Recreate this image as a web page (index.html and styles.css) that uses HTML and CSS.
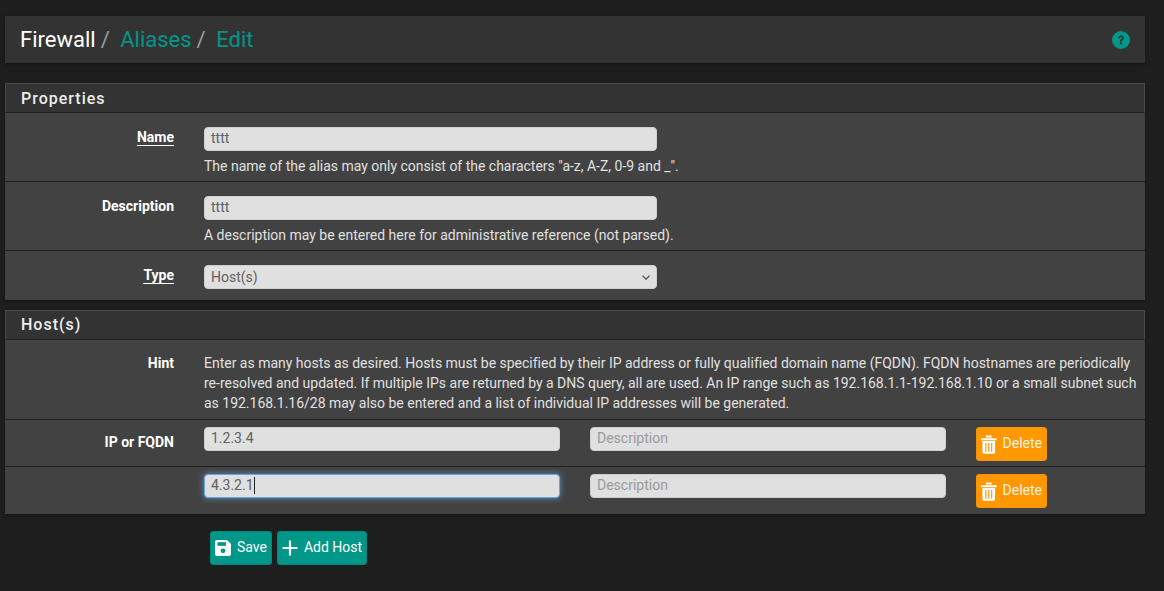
FILE: index.html
```html
<!DOCTYPE html>
<html lang="en">
<head>
<meta charset="utf-8">
<title>Firewall / Aliases / Edit</title>
<link rel="stylesheet" href="styles.css">
</head>
<body>
<header class="page-head">
  <h1 class="crumbs"><span class="crumb-root">Firewall</span><span class="sep">/</span><a class="crumb-link">Aliases</a><span class="sep">/</span><a class="crumb-link">Edit</a></h1>
  <svg class="help" viewBox="0 0 18 18" width="18" height="18"><circle cx="9" cy="9" r="9" fill="#009688"/><path d="M6.2 7.2C6.3 5.5 7.5 4.5 9.1 4.5c1.7 0 2.8 1 2.8 2.4 0 1.2-.7 1.7-1.4 2.2-.6.4-.8.7-.8 1.3H8c0-1.2.4-1.8 1.1-2.3.6-.4 1-.7 1-1.2 0-.5-.4-.9-1-.9-.7 0-1.1.4-1.2 1.1z" fill="#263238"/><rect x="8" y="11.3" width="1.9" height="1.9" fill="#263238"/></svg>
</header>

<section class="panel">
  <h2 class="panel-title">Properties</h2>
  <div class="row row-name">
    <div class="label"><span class="req">Name</span></div>
    <div class="field">
      <input class="input wide" value="tttt">
      <p class="hint">The name of the alias may only consist of the characters "a-z, A-Z, 0-9 and _".</p>
    </div>
  </div>
  <div class="row row-name">
    <div class="label">Description</div>
    <div class="field">
      <input class="input wide" value="tttt">
      <p class="hint">A description may be entered here for administrative reference (not parsed).</p>
    </div>
  </div>
  <div class="row row-type">
    <div class="label"><span class="req">Type</span></div>
    <div class="field">
      <div class="select wide">Host(s)
        <svg class="chev" viewBox="0 0 8 5" width="8" height="5"><path d="M.6.8L4 4.2 7.4.8" fill="none" stroke="#555" stroke-width="1.3"/></svg>
      </div>
    </div>
  </div>
</section>

<section class="panel">
  <h2 class="panel-title">Host(s)</h2>
  <div class="row row-hint">
    <div class="label">Hint</div>
    <div class="hint-text">Enter as many hosts as desired. Hosts must be specified by their IP address or fully qualified domain name (FQDN). FQDN hostnames are periodically re-resolved and updated. If multiple IPs are returned by a DNS query, all are used. An IP range such as 192.168.1.1-192.168.1.10 or a small subnet such as 192.168.1.16/28 may also be entered and a list of individual IP addresses will be generated.</div>
  </div>
  <div class="row row-host">
    <div class="label">IP or FQDN</div>
    <div class="host-cols">
      <input class="input" value="1.2.3.4">
      <input class="input" placeholder="Description">
      <button class="btn btn-del" type="button">
        <svg viewBox="1 0 16 19" width="16" height="19"><path d="M6 1.2h6M1 4h16" stroke="#fff" stroke-width="2" fill="none"/><path d="M2.5 6h13v11.5a1.5 1.5 0 0 1-1.5 1.5H4a1.5 1.5 0 0 1-1.5-1.5z" fill="#fff"/><path d="M6 8v9M9 8v9M12 8v9" stroke="#ff9800" stroke-width="1.2"/></svg>
        <span class="btn-text">Delete</span>
      </button>
    </div>
  </div>
  <div class="row row-host">
    <div class="label"></div>
    <div class="host-cols">
      <div class="input focused">4.3.2.1<span class="caret"></span></div>
      <input class="input" placeholder="Description">
      <button class="btn btn-del" type="button">
        <svg viewBox="1 0 16 19" width="16" height="19"><path d="M6 1.2h6M1 4h16" stroke="#fff" stroke-width="2" fill="none"/><path d="M2.5 6h13v11.5a1.5 1.5 0 0 1-1.5 1.5H4a1.5 1.5 0 0 1-1.5-1.5z" fill="#fff"/><path d="M6 8v9M9 8v9M12 8v9" stroke="#ff9800" stroke-width="1.2"/></svg>
        <span class="btn-text">Delete</span>
      </button>
    </div>
  </div>
</section>

<div class="actions">
  <button class="btn btn-go" type="button">
    <svg viewBox="0 0 16 16" width="16" height="16"><path d="M2 0h10l4 4v10a2 2 0 0 1-2 2H2a2 2 0 0 1-2-2V2a2 2 0 0 1 2-2z" fill="#fff"/><rect x="2.5" y="2.2" width="8.5" height="3.6" fill="#009688"/><circle cx="8" cy="10.8" r="2.4" fill="#009688"/></svg>
    <span class="btn-text">Save</span>
  </button>
  <button class="btn btn-go" type="button">
    <svg viewBox="0 0 16 16" width="16" height="16"><path d="M8 .5v15M.5 8h15" stroke="#fff" stroke-width="2.2" fill="none"/></svg>
    <span class="btn-text">Add Host</span>
  </button>
</div>
</body>
</html>
```
FILE: styles.css
```css
* { box-sizing: border-box; }
html, body { height: 100%; }
body {
  margin: 0;
  padding: 16px 19px 0 5px;
  background: #1e1e1e;
  color: #e0e0e0;
  font-family: Roboto, "Liberation Sans", sans-serif;
  font-size: 14px;
  overflow: hidden;
}
.page-head {
  height: 47px;
  background: #333333;
  box-shadow: 0 1px 4px rgba(0,0,0,.4);
  display: flex;
  align-items: center;
  justify-content: space-between;
  padding: 0 15px;
  margin-bottom: 20px;
}
.crumbs { margin: 0; padding-top: 1px; font-size: 22px; font-weight: 400; line-height: 46px; display: flex; }
.crumb-root { color: #fff; }
.crumb-link { color: #009688; }
.sep { color: #9e9e9e; margin: 0 10.5px 0 5px; }
.help { display: block; margin-top: 1px; }
.panel {
  background: #424242;
  margin-bottom: 10px;
  box-shadow: 0 1px 3px rgba(0,0,0,.4);
}
.panel-title {
  margin: 0;
  height: 30px;
  line-height: 29px;
  padding-left: 15px;
  background: #333333;
  border: 1px solid #4a4a4a;
  border-bottom: 1px solid #212121;
  font-size: 16px;
  font-weight: 500;
  letter-spacing: 1px;
  color: #eeeeee;
}
.panel + .panel .panel-title { line-height: 28px; }
.row {
  display: flex;
  border-top: 1px solid #212121;
}
.row:nth-child(2) { border-top: 0; }
.label {
  width: 169px;
  flex: none;
  text-align: right;
  font-weight: 700;
  color: #fff;
  line-height: 16px;
}
.req { border-bottom: 1px solid #fff; display: inline-block; line-height: 15px; }
.field { margin-left: 30px; }
.row-name { height: 69px; padding-top: 14px; }
.row-name:nth-child(2) { height: 68px; }
.row-name .label { padding-top: 2px; }
.row-type { height: 50px; padding-top: 14px; }
.row-type .label { padding-top: 2px; }
.input, .select {
  display: block;
  height: 24px;
  background: #e0e0e0;
  border: 1px solid #cfcfcf;
  border-radius: 4px;
  padding: 0 6px;
  font: 14px/22px Roboto, sans-serif;
  color: #616161;
  width: 356px;
  outline: 0;
}
.input { padding-bottom: 2px; line-height: 20px; }
.input::placeholder { color: #9a9a9a; opacity: 1; }
.wide { width: 453px; }
.select { position: relative; }
.chev { position: absolute; right: 6px; top: 9px; }
.hint { margin: 7px 0 0; font-size: 14px; line-height: 17px; color: #e0e0e0; letter-spacing: -0.01px; }
.row-hint { height: 79px; padding-top: 15px; }
.hint-text {
  margin-left: 30px;
  width: 940px;
  line-height: 20px;
  color: #e0e0e0;
  margin-top: -2px;
  letter-spacing: -0.01px;
}
.row-host { height: 47px; padding-top: 7px; }
.row-host:last-child { height: 48px; }
.row-host .label { padding-top: 7px; }
.host-cols { margin-left: 30px; display: flex; gap: 30px; align-items: flex-start; }
.focused {
  border-color: #64a5e8;
  box-shadow: 0 0 6px rgba(102,175,233,.75);
}
.caret { display: inline-block; width: 1px; height: 17px; background: #222; vertical-align: -4px; }
.btn {
  display: inline-flex;
  align-items: center;
  height: 34px;
  border: 1px solid transparent;
  border-radius: 3px;
  font: 14px Roboto, sans-serif;
  color: #fff;
  padding: 0 4px;
  gap: 6px;
}
.btn-text { margin-bottom: 2px; }
.btn-del { background: #ff9800; border-color: #f59300; width: 71px; color: #fff3e0; }
.btn-go { background: #009688; border-color: #00897b; }
.actions { display: flex; gap: 5px; margin: 17px 0 0 205px; }
```
